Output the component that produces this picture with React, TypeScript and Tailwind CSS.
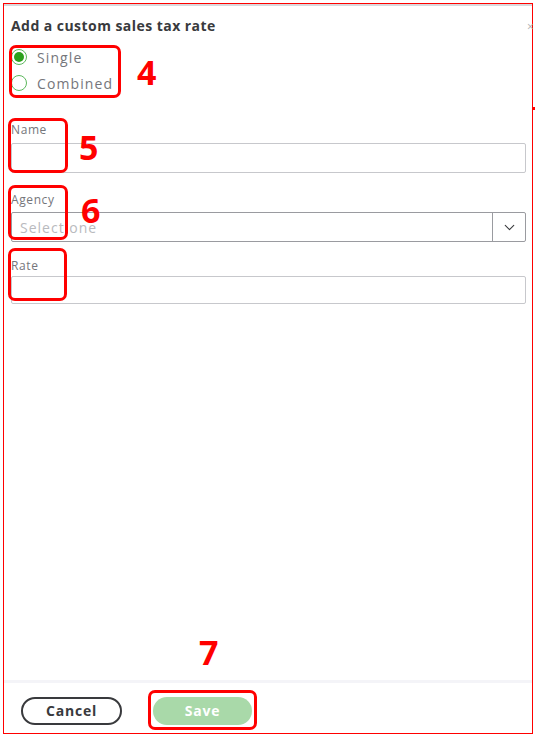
import { ChevronDown } from "lucide-react";

const font = { fontFamily: "'Open Sans', 'Noto Sans', sans-serif" };

function Radio({ label, checked }: { label: string; checked?: boolean }) {
  return (
    <label className="flex h-[26px] items-center gap-[10px]">
      <span className="flex h-[16px] w-[16px] items-center justify-center rounded-full border border-[#5cb85c] bg-white">
        {checked && <span className="h-[10px] w-[10px] rounded-full bg-[#2ca01c]" />}
      </span>
      <span className="text-[14px] tracking-[1.1px] text-[#75767b]">{label}</span>
    </label>
  );
}

function Annotation({ className }: { className: string }) {
  return <div className={`absolute rounded-[7px] border-[3px] border-[#ff0000] ${className}`} />;
}

function Marker({ n, className }: { n: string; className: string }) {
  return (
    <span
      className={`absolute text-[34px] font-bold leading-none text-[#ff0000] ${className}`}
      style={{ fontFamily: "'Open Sans', sans-serif" }}
    >
      {n}
    </span>
  );
}

export default function App() {
  return (
    <div className="relative h-[738px] w-[535px] overflow-hidden bg-white pl-[3px] pt-[3px]" style={font}>
      <div className="flex h-[731px] w-[530px] flex-col border border-[#ff0000]">
        <div className="flex flex-1 flex-col border-t-2 border-[#d9d9dc] px-[7px]">
          <h1 className="mt-[12px] text-[14px] font-bold leading-[16px] tracking-[0.45px] text-[#393a3d]">
            Add a custom sales tax rate
          </h1>

          <div className="mt-[10px] flex flex-col">
            <Radio label="Single" checked />
            <Radio label="Combined" />
          </div>

          <label className="mt-[27px] text-[12px] leading-[14px] tracking-[0.6px] text-[#75767b]">Name</label>
          <input className="mt-[6px] h-[30px] w-[515px] rounded-[2px] border border-[#c7c8cc] bg-white px-2 outline-none" />

          <label className="mt-[20px] text-[12px] leading-[14px] tracking-[0.6px] text-[#75767b]">Agency</label>
          <div className="mt-[5px] flex h-[30px] w-[515px] rounded-[2px] border border-[#9a9ba0] bg-white">
            <span className="flex flex-1 items-center pl-[8px] text-[14px] tracking-[1px] text-[#b9babe]">
              Select one
            </span>
            <span className="flex w-[33px] items-center justify-center border-l border-[#9a9ba0]">
              <ChevronDown size={17} strokeWidth={1.5} className="text-[#393a3d]" />
            </span>
          </div>

          <label className="mt-[17px] text-[12px] leading-[14px] tracking-[0.6px] text-[#75767b]">Rate</label>
          <input className="mt-[3px] h-[28px] w-[515px] rounded-[2px] border border-[#c7c8cc] bg-white px-2 outline-none" />
        </div>

        <div className="h-[3px] bg-[#f4f4f8]" />
        <div className="flex h-[50px] items-start gap-[31px] pl-[17px] pt-[14px]">
          <button className="h-[28px] w-[101px] rounded-full border-2 border-[#393a3d] bg-white text-[14px] font-bold leading-none tracking-[0.8px] text-[#393a3d]">
            Cancel
          </button>
          <button className="h-[28px] w-[99px] rounded-full bg-[#a9d9a9] text-[14px] font-bold leading-none tracking-[0.8px] text-white">
            Save
          </button>
        </div>
      </div>

      <span className="absolute left-[527px] top-[18px] text-[12px] text-[#b0b0b0]">×</span>
      <span className="absolute left-[532px] top-[107px] h-[3px] w-[3px] bg-[#ff0000]" />

      <Annotation className="left-[9px] top-[45px] h-[53px] w-[112px]" />
      <Marker n="4" className="left-[137px] top-[55px]" />
      <Annotation className="left-[8px] top-[118px] h-[55px] w-[60px]" />
      <Marker n="5" className="left-[79px] top-[130px]" />
      <Annotation className="left-[8px] top-[185px] h-[55px] w-[60px]" />
      <Marker n="6" className="left-[81px] top-[193px]" />
      <Annotation className="left-[8px] top-[248px] h-[53px] w-[59px]" />
      <Marker n="7" className="left-[199px] top-[635px]" />
      <Annotation className="left-[148px] top-[690px] h-[40px] w-[109px]" />
    </div>
  );
}
